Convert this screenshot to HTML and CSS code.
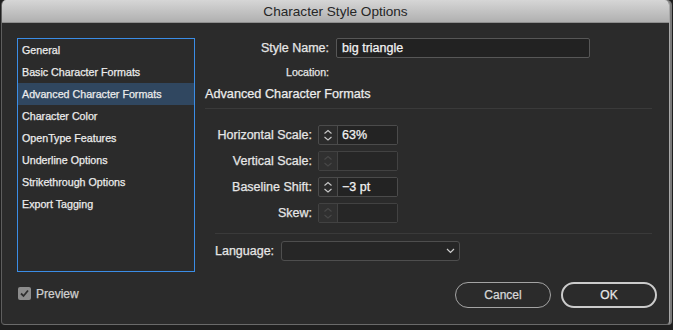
FILE: index.html
```html
<!DOCTYPE html>
<html lang="en">
<head>
    <meta charset="UTF-8">
    <title>Character Style Options</title>
    <link rel="stylesheet" href="styles.css">
</head>
<body>
    <div class="window">
        <div class="titlebar">Character Style Options</div>
        <div class="dialog">
            <div class="top">
                <ul class="nav-list">
                    <li>General</li>
                    <li>Basic Character Formats</li>
                    <li class="selected">Advanced Character Formats</li>
                    <li>Character Color</li>
                    <li>OpenType Features</li>
                    <li>Underline Options</li>
                    <li>Strikethrough Options</li>
                    <li>Export Tagging</li>
                </ul>

                <div class="main">
                    <div class="head-grid">
                        <label class="label">Style Name:</label>
                        <div class="textbox">big triangle</div>
                        <label class="label small">Location:</label>
                        <div></div>
                    </div>

                    <h2 class="section-title">Advanced Character Formats</h2>

                    <div class="section">
                        <div class="field-grid">
                            <label class="label">Horizontal Scale:</label>
                            <div class="spinner">
                                <span class="arrows">
                                    <svg width="18" height="18" viewBox="0 0 18 18"><path d="M5.5 7.5 L9 4.5 L12.5 7.5 M5.5 11 L9 14 L12.5 11" fill="none" stroke="#c8c8c8" stroke-width="1.1"/></svg>
                                </span>
                                <span class="value">63%</span>
                            </div>

                            <label class="label">Vertical Scale:</label>
                            <div class="spinner disabled">
                                <span class="arrows">
                                    <svg width="18" height="18" viewBox="0 0 18 18"><path d="M5.5 7.5 L9 4.5 L12.5 7.5 M5.5 11 L9 14 L12.5 11" fill="none" stroke="#484848" stroke-width="1.1"/></svg>
                                </span>
                                <span class="value"></span>
                            </div>

                            <label class="label">Baseline Shift:</label>
                            <div class="spinner">
                                <span class="arrows">
                                    <svg width="18" height="18" viewBox="0 0 18 18"><path d="M5.5 7.5 L9 4.5 L12.5 7.5 M5.5 11 L9 14 L12.5 11" fill="none" stroke="#c8c8c8" stroke-width="1.1"/></svg>
                                </span>
                                <span class="value">&minus;3 pt</span>
                            </div>

                            <label class="label">Skew:</label>
                            <div class="spinner disabled">
                                <span class="arrows">
                                    <svg width="18" height="18" viewBox="0 0 18 18"><path d="M5.5 7.5 L9 4.5 L12.5 7.5 M5.5 11 L9 14 L12.5 11" fill="none" stroke="#484848" stroke-width="1.1"/></svg>
                                </span>
                                <span class="value"></span>
                            </div>
                        </div>

                        <div class="lang-row">
                            <label class="label">Language:</label>
                            <div class="dropdown">
                                <svg width="9" height="6" viewBox="0 0 9 6"><path d="M1 1 L4.5 4.5 L8 1" fill="none" stroke="#cfcfcf" stroke-width="1.2"/></svg>
                            </div>
                        </div>
                    </div>
                </div>
            </div>

            <div class="footer">
                <div class="preview">
                    <span class="checkbox">
                        <svg width="13" height="13" viewBox="0 0 13 13"><path d="M3 6.5 L5.5 9 L10 3.5" fill="none" stroke="#2e2e2e" stroke-width="1.8"/></svg>
                    </span>
                    Preview
                </div>
                <div class="buttons">
                    <button class="btn">Cancel</button>
                    <button class="btn primary">OK</button>
                </div>
            </div>
        </div>
    </div>
</body>
</html>
```

FILE: styles.css
```css
body {
    margin: 0;
    padding: 0;
    background-color: #1f1f1f;
    font-family: 'Liberation Sans', Arial, sans-serif;
    color: #e2e2e2;
    width: 673px;
    height: 330px;
    overflow: hidden;
}

.window {
    width: 669px;
    height: 325px;
    box-sizing: border-box;
    margin-left: 1px;
    border: 1px solid #5e5e5e;
    border-top: none;
    border-right-color: #a8a8a8;
    border-bottom-color: #6a6a6a;
    border-radius: 5px 5px 4px 4px;
    background-color: #2b2b2b;
    box-shadow: 2px 0 0 #7a7a7a;
    overflow: hidden;
    -webkit-text-stroke: 0.25px currentColor;
}

.titlebar {
    height: 23px;
    box-sizing: border-box;
    border-bottom: 1px solid #8e8e8e;
    background: linear-gradient(#d6d6d6, #b0b0b0);
    color: #262626;
    font-size: 13.6px;
    line-height: 23px;
    text-align: center;
    -webkit-text-stroke: 0;
}

.dialog {
    padding: 15px 12px 0 15px;
}

.top {
    display: flex;
}

.nav-list {
    list-style: none;
    margin: 0;
    padding: 0;
    width: 178px;
    height: 234px;
    box-sizing: border-box;
    border: 1px solid #3b8de6;
    font-size: 10.7px;
}

.nav-list li {
    height: 22px;
    line-height: 22px;
    padding-left: 4px;
    color: #ececec;
}

.nav-list li.selected {
    background-color: #304760;
}

.main {
    flex: 1;
    padding: 0 5px 0 10px;
}

.head-grid {
    display: grid;
    grid-template-columns: 124px 254px;
    column-gap: 7px;
    row-gap: 7px;
    align-items: center;
}

.label {
    text-align: right;
    font-size: 12.5px;
    color: #e6e6e6;
}

.label.small {
    font-size: 10.6px;
    line-height: 14px;
}

.textbox {
    height: 20px;
    box-sizing: border-box;
    border: 1px solid #575757;
    border-radius: 2px;
    background-color: #222222;
    font-size: 12.5px;
    line-height: 18px;
    padding-left: 5px;
    color: #f2f2f2;
}

.section-title {
    margin: 7px 0 0 0;
    height: 22px;
    line-height: 16px;
    font-size: 12.7px;
    font-weight: normal;
    color: #ececec;
    border-bottom: 1px solid #3a3a3a;
}

.section {
    padding: 16px 0 0 10px;
}

.field-grid {
    display: grid;
    grid-template-columns: 97px 80px;
    column-gap: 6px;
    row-gap: 6px;
    align-items: center;
    padding-bottom: 10px;
    border-bottom: 1px solid #3a3a3a;
}

.spinner {
    display: flex;
    height: 20px;
    box-sizing: border-box;
    border: 1px solid #4b4b4b;
    border-radius: 2px;
}

.spinner .arrows {
    width: 18px;
    border-right: 1px solid #4b4b4b;
    display: flex;
    align-items: center;
    justify-content: center;
}

.spinner .value {
    flex: 1;
    background-color: #232323;
    padding-left: 4px;
    font-size: 12.5px;
    line-height: 18px;
    color: #f2f2f2;
}

.spinner.disabled {
    border-color: #424242;
}

.spinner.disabled .arrows {
    background-color: #303030;
    border-right-color: #424242;
}

.spinner.disabled .value {
    background-color: #262626;
}

.lang-row {
    display: flex;
    align-items: center;
    gap: 7px;
    margin-top: 7px;
}

.dropdown {
    width: 179px;
    height: 20px;
    box-sizing: border-box;
    border: 1px solid #4e4e4e;
    border-radius: 3px;
    background-color: #262626;
    display: flex;
    align-items: center;
    justify-content: flex-end;
    padding-right: 4px;
}

.footer {
    display: flex;
    justify-content: space-between;
    align-items: center;
    margin-top: 10px;
}

.preview {
    display: flex;
    align-items: center;
    gap: 5px;
    margin-left: 1px;
    margin-bottom: 3px;
    font-size: 12px;
    color: #cfcfcf;
}

.checkbox {
    width: 13px;
    height: 13px;
    border-radius: 2px;
    background-color: #8c8c8c;
    display: flex;
}

.buttons {
    display: flex;
    gap: 10px;
}

.btn {
    width: 96px;
    height: 26px;
    box-sizing: border-box;
    border: 1px solid #a4a4a4;
    border-radius: 13px;
    background: transparent;
    color: #d8d8d8;
    font-family: 'Liberation Sans', Arial, sans-serif;
    font-size: 12px;
    padding: 0;
    -webkit-text-stroke: 0.25px currentColor;
}

.btn.primary {
    border: 2px solid #cbcbcb;
    color: #e6e6e6;
}
```
